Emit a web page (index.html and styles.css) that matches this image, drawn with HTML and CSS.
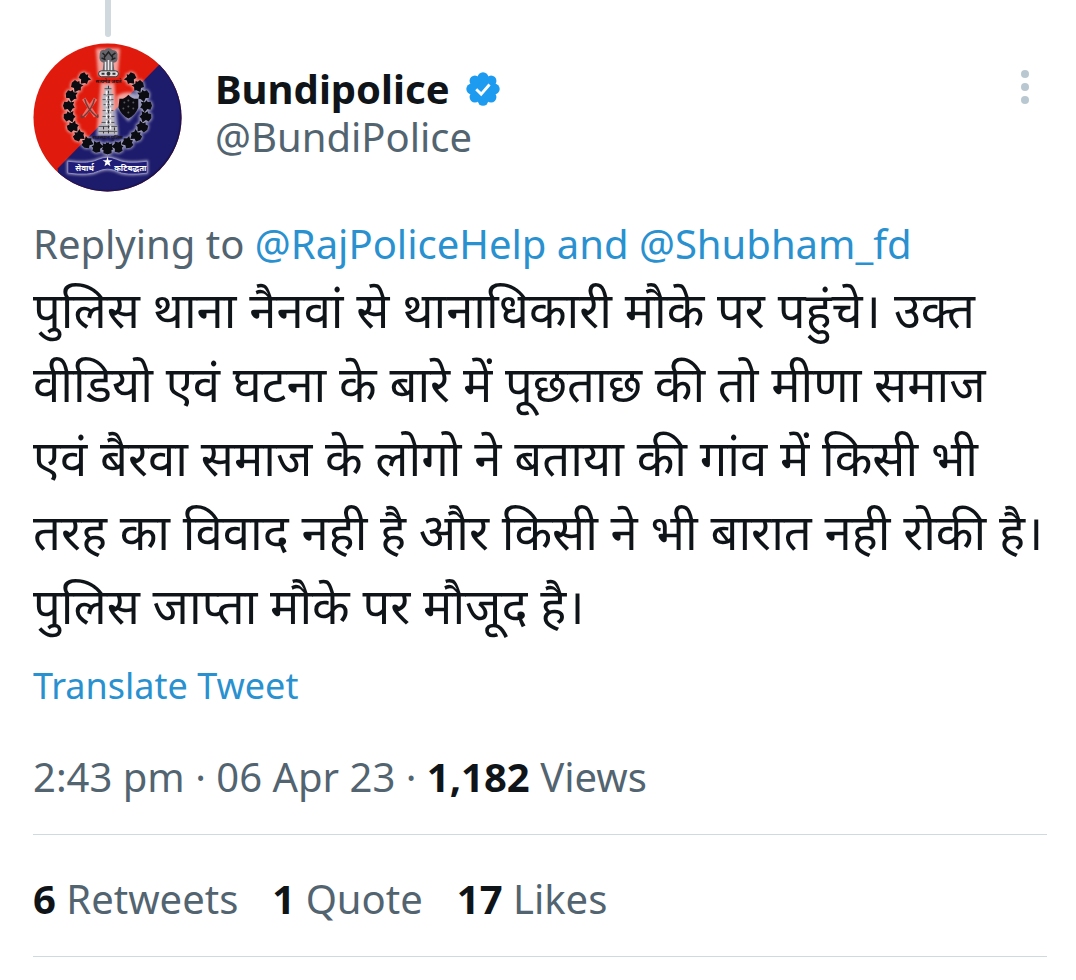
FILE: index.html
```
<!DOCTYPE html>
<html lang="en">
<head>
    <meta charset="UTF-8">
    <meta name="viewport" content="width=device-width, initial-scale=1.0">
    <title>Bundipolice</title>
    <link rel="stylesheet" href="styles.css">
</head>
<body>

    <article class="tweet">
        <div class="thread-line"></div>

        <header class="tweet-header">
            <svg class="avatar" viewBox="0 0 150 150" role="img" aria-label="Bundipolice">
                <defs>
                    <clipPath id="round"><circle cx="75" cy="75" r="74.5"/></clipPath>
                    <radialGradient id="shade">
                        <stop offset="0.95" stop-color="#000" stop-opacity="0"/>
                        <stop offset="1" stop-color="#000" stop-opacity="0.5"/>
                    </radialGradient>
                    <filter id="glow" x="-20%" y="-20%" width="140%" height="140%">
                        <feGaussianBlur stdDeviation="1.6"/>
                    </filter>
                    <path id="leaf" d="M-6 0 L-4 -4 L-1 -3 L2 -6 L4 -2 L6 -1 L4 2 L5 5 L1 4 L-1 6 L-2 4 L-5 4 Z"/>
                    <g id="wreath">
                        <use href="#leaf" transform="rotate(37 75 67) translate(75 28) rotate(90)"/>
                        <use href="#leaf" transform="rotate(53 75 67) translate(75 28) rotate(90)"/>
                        <use href="#leaf" transform="rotate(69 75 67) translate(75 28) rotate(90)"/>
                        <use href="#leaf" transform="rotate(85 75 67) translate(75 28) rotate(90)"/>
                        <use href="#leaf" transform="rotate(101 75 67) translate(75 28) rotate(90)"/>
                        <use href="#leaf" transform="rotate(117 75 67) translate(75 28) rotate(90)"/>
                        <use href="#leaf" transform="rotate(133 75 67) translate(75 28) rotate(90)"/>
                        <use href="#leaf" transform="rotate(149 75 67) translate(75 28) rotate(90)"/>
                        <use href="#leaf" transform="rotate(165 75 67) translate(75 28) rotate(90)"/>
                        <use href="#leaf" transform="rotate(180 75 67) translate(75 28) rotate(90)"/>
                    </g>
                    <path id="ribbon" d="M35 119 Q57 122 66 117 Q75 113 84 117 Q93 122 115 119 V131 Q93 134 84 129 Q75 125 66 129 Q57 134 35 131 Z"/>
                </defs>
                <g clip-path="url(#round)">
                    <rect width="150" height="150" fill="#e01a0c"/>
                    <path d="M128 21 L25 126 V150 H150 V21 Z" fill="#1d1b6c"/>
                    <circle cx="74" cy="74" r="77" fill="url(#shade)"/>

                    <!-- soft white edge behind the emblem -->
                    <g filter="url(#glow)" fill="#fff" stroke="#fff" opacity="0.6">
                        <path d="M65 7 H86 L84 32 H67 Z" stroke-width="3"/>
                        <path d="M70 42 H80 L84 92 H66 Z" stroke-width="4"/>
                        <path d="M86 54 Q96 48 106 54 V65 L96 77 L86 65 Z" stroke-width="3"/>
                        <g stroke-width="2">
                            <use href="#wreath"/>
                            <use href="#wreath" transform="translate(150 0) scale(-1 1)"/>
                            <use href="#ribbon"/>
                        </g>
                    </g>

                    <g fill="#0b0b12">
                        <use href="#wreath"/>
                        <use href="#wreath" transform="translate(150 0) scale(-1 1)"/>
                    </g>

                    <!-- lion capital -->
                    <path d="M67 13 Q67 6 72 7 Q76 3 80 7 Q86 7 85 14 Q86 19 81 20 L82 29 H70 L71 20 Q66 18 67 13 Z" fill="#66656b"/>
                    <path d="M70 10 L73 13 L76 9 L79 13 L83 10 M69 15 L73 17 M83 15 L79 17 M72 13 V17 M80 13 V17" fill="none" stroke="#222" stroke-width="1.5"/>
                    <path d="M73 19 V29 M76 17 V29 M79 19 V29" stroke="#ece9ea" stroke-width="1.6"/>
                    <rect x="66" y="28" width="20" height="6" rx="3" fill="#dedce0" stroke="#333"/>
                    <path d="M69 31 H72 M80 31 H83" stroke="#333" stroke-width="2"/>
                    <circle cx="76" cy="31" r="2" fill="#333"/>
                    <text class="emblem-text" x="76" y="40">सत्यमेव जयते</text>

                    <!-- victory tower -->
                    <path d="M75 42 L79 45 V52 H81 V65 H80 L82 83 H85 V92 H66 V83 H69 L71 65 H70 V52 H72 V45 Z" fill="#bab8be"/>
                    <path d="M72 46 H79 M71 52 H81 M70 57 H81 M71 62 H81 M70 68 H81 M70 74 H82 M69 80 H82 M66 84 H85 M66 89 H85" stroke="#55555b" stroke-width="1"/>
                    <path d="M74 48 V82 M78 53 V88" stroke="#f3f2f5" stroke-width="1.5" stroke-dasharray="4 2"/>
                    <path d="M76 43 V91 M71 84 V91 M82 85 V91" stroke="#333339" stroke-width="1" stroke-dasharray="3 2"/>

                    <!-- crossed swords -->
                    <path d="M51 56 Q57 65 63 74 M63 56 Q57 65 51 74" fill="none" stroke="#f5a29b" stroke-width="4" opacity="0.6"/>
                    <path d="M52 56 Q54 66 64 74 Q66 76 65 72 M62 56 Q60 66 51 74 Q48 77 49 72" fill="none" stroke="#723c3c" stroke-width="1.5"/>

                    <!-- shield -->
                    <path d="M87 56 Q92 57 96 52 Q100 57 106 56 L106 65 Q103 73 96 76 Q89 73 86 65 Z" fill="#0c0c12"/>
                    <g fill="#55555d">
                        <circle cx="92" cy="60" r="1"/>
                        <circle cx="96" cy="58" r="1"/>
                        <circle cx="101" cy="60" r="1"/>
                        <circle cx="91" cy="66" r="1"/>
                        <circle cx="96" cy="64" r="1"/>
                        <circle cx="101" cy="66" r="1"/>
                        <circle cx="96" cy="70" r="1"/>
                    </g>
                    <text class="emblem-text" x="75" y="97">राजस्थान पुलिस</text>

                    <use href="#ribbon" fill="#201d78" stroke="#8f8dbd" stroke-width="1"/>
                    <path d="M75 114 L76 118 H80 L77 120 L78 124 L75 122 L72 124 L73 120 L70 118 H74 Z" fill="#fff"/>
                    <text class="ribbon-text" x="52" y="129">सेवार्थ</text>
                    <text class="ribbon-text" x="98" y="129">कटिबद्धता</text>
                </g>
            </svg>

            <div class="author">
                <div class="name-row">
                    <a class="name" href="#">Bundipolice</a>
                    <svg class="verified" viewBox="0 0 24 24" role="img" aria-label="Verified account">
                        <g fill="#1d9bf0">
                            <circle cx="12" cy="12" r="9.4"/>
                            <circle cx="12" cy="4" r="3.8"/>
                            <circle cx="17.7" cy="6.3" r="3.8"/>
                            <circle cx="20" cy="12" r="3.8"/>
                            <circle cx="17.7" cy="17.7" r="3.8"/>
                            <circle cx="12" cy="20" r="3.8"/>
                            <circle cx="6.3" cy="17.7" r="3.8"/>
                            <circle cx="4" cy="12" r="3.8"/>
                            <circle cx="6.3" cy="6.3" r="3.8"/>
                        </g>
                        <path d="M7.2 12.2 L10.7 15.6 L16.6 8.8" fill="none" stroke="#fff" stroke-width="2"/>
                    </svg>
                </div>
                <a class="handle" href="#">@BundiPolice</a>
            </div>

            <button class="more" type="button" aria-label="More">
                <svg viewBox="0 0 8 34">
                    <circle cx="4" cy="4" r="4"/>
                    <circle cx="4" cy="17" r="4"/>
                    <circle cx="4" cy="30" r="4"/>
                </svg>
            </button>
        </header>

        <p class="replying">Replying to <a href="#">@RajPoliceHelp and @Shubham_fd</a></p>

        <p class="tweet-text" lang="hi">पुलिस थाना नैनवां से थानाधिकारी मौके पर पहुंचे। उक्त<br>
            वीडियो एवं घटना के बारे में पूछताछ की तो मीणा समाज<br>
            एवं बैरवा समाज के लोगो ने बताया की गांव में किसी भी<br>
            तरह का विवाद नही है और किसी ने भी बारात नही रोकी है।<br>
            पुलिस जाप्ता मौके पर मौजूद है।</p>

        <a class="translate" href="#">Translate Tweet</a>

        <p class="meta">2:43 pm · 06 Apr 23 · <strong>1,182</strong> Views</p>

        <div class="stats">
            <a href="#"><strong>6</strong> Retweets</a>
            <a href="#"><strong>1</strong> Quote</a>
            <a href="#"><strong>17</strong> Likes</a>
        </div>
    </article>

</body>
</html>
```
FILE: styles.css
```
* {
    box-sizing: border-box;
}

body {
    margin: 0;
    background-color: #fff;
    color: #0f1419;
    font-family: "Noto Sans", "Noto Sans Devanagari", sans-serif;
    font-size: 40px;
    line-height: 48px;
}

p {
    margin: 0;
}

a {
    color: #2a91d0;
    text-decoration: none;
}

.tweet {
    padding: 0 29px 0 33px;
}

.thread-line {
    width: 6px;
    height: 37px;
    margin-left: 72px;
    border-radius: 0 0 3px 3px;
    background-color: #cfd9de;
}

.tweet-header {
    display: flex;
    align-items: flex-start;
    margin-top: 6px;
}

.avatar {
    flex: none;
    width: 149px;
    height: 149px;
}

.author {
    flex: 1;
    margin-left: 33px;
    padding-top: 22px;
}

.name-row {
    display: flex;
    align-items: center;
    gap: 16px;
}

.name {
    color: #0f1419;
    font-weight: bold;
}

.verified {
    width: 34px;
    height: 34px;
}

.author .handle {
    display: block;
    color: #536471;
}

.more {
    margin: 27px 18px 0 0;
    padding: 0;
    border: none;
    background: none;
    cursor: pointer;
}

.more svg {
    display: block;
    width: 8px;
    height: 34px;
    fill: #b9c8d0;
}

.replying {
    margin-top: 28px;
    color: #536471;
}

.tweet-text {
    margin-top: 4px;
    font-size: 49px;
    line-height: 74px;
}

.translate {
    display: block;
    margin-top: 20px;
    font-size: 36px;
}

.meta {
    padding: 43px 0 33px;
    border-bottom: 1px solid #cfd9de;
    color: #536471;
}

.meta strong,
.stats strong {
    color: #0f1419;
}

.stats {
    display: flex;
    gap: 34px;
    padding: 40px 0 33px;
    border-bottom: 1px solid #cfd9de;
}

.stats a {
    color: #536471;
}

.emblem-text {
    fill: #17121a;
    font-size: 5px;
    font-weight: bold;
    text-anchor: middle;
}

.ribbon-text {
    fill: #fff;
    font-size: 8px;
    font-weight: bold;
    text-anchor: middle;
}
```
